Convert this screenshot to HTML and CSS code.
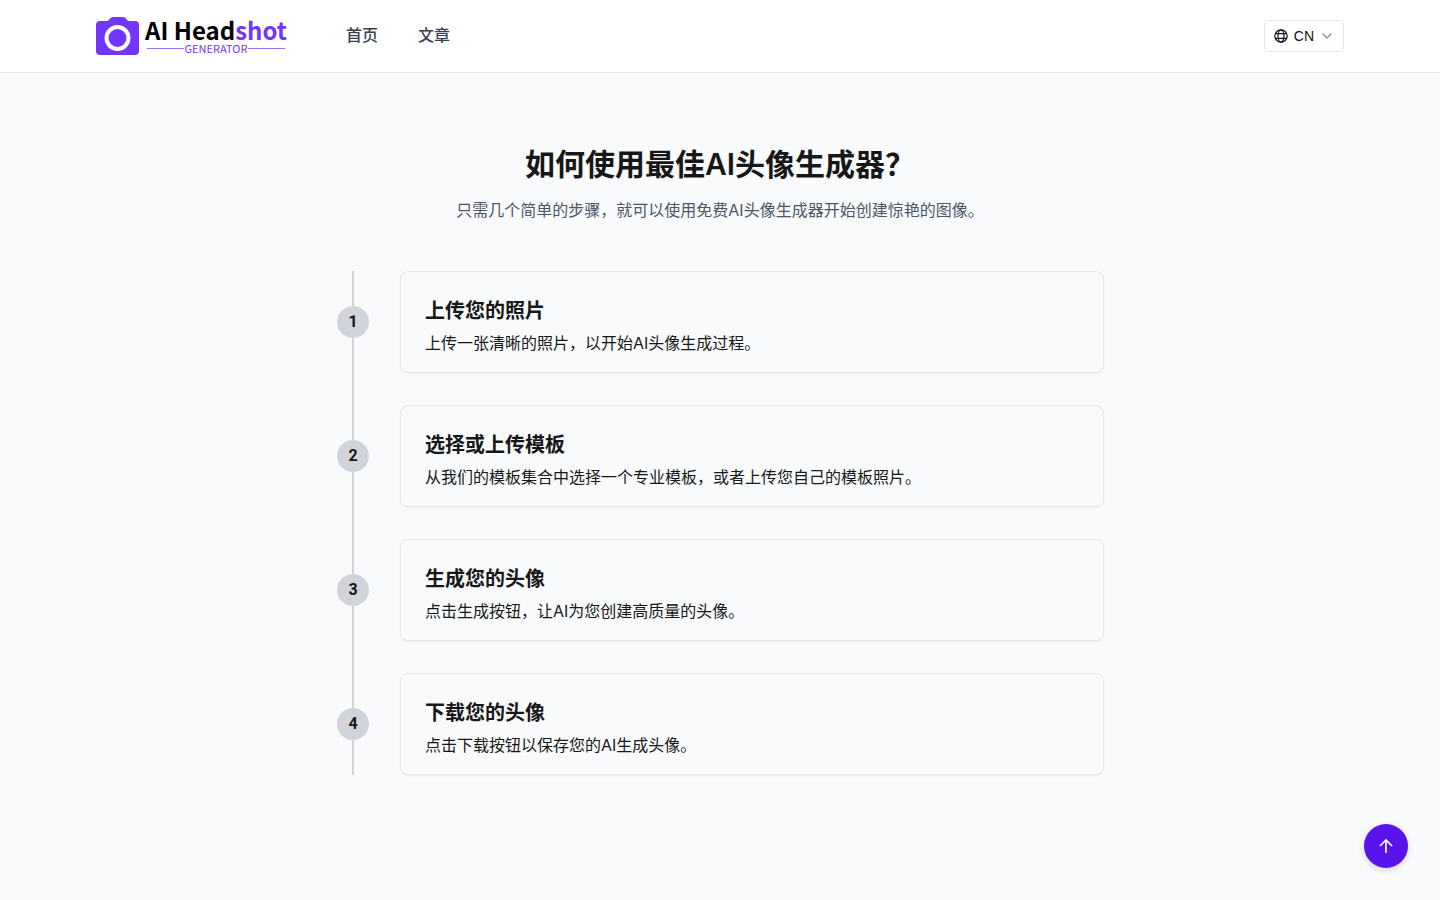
FILE: index.html
```
<!DOCTYPE html>
<html lang="zh-CN">
<head>
    <meta charset="UTF-8">
    <meta name="viewport" content="width=device-width, initial-scale=1.0">
    <title>AI Headshot Generator</title>
    <link rel="stylesheet" href="styles.css">
</head>
<body>

    <header class="header">
        <div class="header-inner">
            <a href="#" class="logo">
                <svg class="logo-icon" viewBox="0 0 43 38" aria-hidden="true">
                    <path fill="#7236ff" d="M4 4h7c2 0 3-4 6-4h10c3 0 4 4 6 4h6a4 4 0 0 1 4 4v26a4 4 0 0 1-4 4H4a4 4 0 0 1-4-4V8a4 4 0 0 1 4-4z"/>
                    <circle cx="21.500" cy="21" r="11" fill="none" stroke="#fff" stroke-width="4"/>
                </svg>
                <span class="logo-text">
                    <span class="logo-name">AI Head<span class="logo-accent">shot</span></span>
                    <span class="logo-sub">GENERATOR</span>
                </span>
            </a>
            <nav class="nav">
                <a href="#">首页</a>
                <a href="#">文章</a>
            </nav>
            <button class="lang" type="button">
                <svg width="16" height="16" viewBox="0 0 16 16" fill="none" stroke="#111" stroke-width="1.200" aria-hidden="true">
                    <circle cx="8" cy="8" r="6.200"/>
                    <ellipse cx="8" cy="8" rx="3" ry="6.200"/>
                    <path d="M2.500 5.600h11M2.500 10.400h11"/>
                </svg>
                <span>CN</span>
                <svg width="16" height="16" viewBox="0 0 16 16" fill="none" stroke="#888" stroke-width="1.200" stroke-linecap="round" stroke-linejoin="round" aria-hidden="true">
                    <path d="M4 6l4 4 4-4"/>
                </svg>
            </button>
        </div>
    </header>

    <main class="guide">
        <h1>如何使用最佳AI头像生成器？</h1>
        <p class="intro">只需几个简单的步骤，就可以使用免费AI头像生成器开始创建惊艳的图像。</p>

        <ol class="steps">
            <li class="step">
                <span class="step-number">1</span>
                <div class="card">
                    <h2>上传您的照片</h2>
                    <p>上传一张清晰的照片，以开始AI头像生成过程。</p>
                </div>
            </li>
            <li class="step">
                <span class="step-number">2</span>
                <div class="card">
                    <h2>选择或上传模板</h2>
                    <p>从我们的模板集合中选择一个专业模板，或者上传您自己的模板照片。</p>
                </div>
            </li>
            <li class="step">
                <span class="step-number">3</span>
                <div class="card">
                    <h2>生成您的头像</h2>
                    <p>点击生成按钮，让AI为您创建高质量的头像。</p>
                </div>
            </li>
            <li class="step">
                <span class="step-number">4</span>
                <div class="card">
                    <h2>下载您的头像</h2>
                    <p>点击下载按钮以保存您的AI生成头像。</p>
                </div>
            </li>
        </ol>
    </main>

    <button class="to-top" type="button" aria-label="返回顶部">
        <svg width="20" height="20" viewBox="0 0 20 20" fill="none" stroke="#fff" stroke-width="1.600" aria-hidden="true">
            <path d="M10 17V4M4 10l6-6 6 6"/>
        </svg>
    </button>

</body>
</html>
```
FILE: styles.css
```
* {
    box-sizing: border-box;
    margin: 0;
    padding: 0;
}

body {
    font-family: Inter, "Noto Sans CJK SC", sans-serif;
    font-size: 16px;
    line-height: 24px;
    background-color: #f9fafc;
    color: #171717;
}

a {
    color: inherit;
    text-decoration: none;
}

/* Header */
.header {
    background-color: #fff;
    border-bottom: 1px solid #e5e7eb;
}

.header-inner {
    display: flex;
    align-items: center;
    max-width: 1280px;
    height: 72px;
    margin: 0 auto;
    padding: 0 16px;
}

.logo {
    display: flex;
    align-items: center;
    gap: 6px;
}

.logo-icon {
    width: 43px;
    height: 38px;
}

.logo-text {
    display: flex;
    flex-direction: column;
    padding-bottom: 2px;
    font-family: "Noto Sans CJK SC", sans-serif;
}

.logo-name {
    font-size: 24px;
    font-weight: 700;
    line-height: 26px;
    color: #000;
}

.logo-accent {
    color: #7236ff;
}

.logo-sub {
    display: flex;
    align-items: center;
    gap: 1px;
    padding: 0 2px;
    font-size: 11px;
    line-height: 10px;
    color: #7236ff;
}

.logo-sub::before,
.logo-sub::after {
    content: "";
    flex: 1;
    height: 1px;
    background-color: #9a70ff;
}

.nav {
    display: flex;
    gap: 40px;
    margin-left: 59px;
    padding-bottom: 2px;
    font-weight: 500;
    color: #374151;
}

.lang {
    display: flex;
    align-items: center;
    gap: 5px;
    height: 32px;
    margin-left: auto;
    padding: 0 8px;
    border: 1px solid #e5e7eb;
    border-radius: 4px;
    background-color: #fff;
    color: #111;
    font-family: "Liberation Sans", sans-serif;
    font-size: 14px;
    cursor: pointer;
}

/* Steps */
.guide {
    max-width: 800px;
    margin: 0 auto;
    padding: 71px 16px 125px;
}

h1 {
    font-size: 30px;
    font-weight: 600;
    line-height: 40px;
    text-align: center;
}

.intro {
    margin-top: 14px;
    color: #4b5563;
    text-align: center;
}

.steps {
    position: relative;
    display: flex;
    flex-direction: column;
    gap: 32px;
    margin-top: 49px;
    list-style: none;
}

.steps::before {
    content: "";
    position: absolute;
    top: 0;
    bottom: 0;
    left: 16px;
    width: 2px;
    background-color: #d1d5db;
}

.step {
    position: relative;
    display: flex;
    align-items: center;
    gap: 31px;
    padding-left: 1px;
}

.step-number {
    display: flex;
    align-items: center;
    justify-content: center;
    width: 32px;
    height: 32px;
    border-radius: 50%;
    background-color: #d1d5db;
    font-family: Roboto, sans-serif;
    font-weight: 700;
}

.card {
    flex: 1;
    padding: 25px 24px 17px;
    border: 1px solid #e5e7eb;
    border-radius: 8px;
    box-shadow: 0 1px 2px rgba(0, 0, 0, 0.05);
}

.card h2 {
    margin-bottom: 6px;
    font-size: 20px;
    font-weight: 600;
    line-height: 28px;
}

/* Back to top */
.to-top {
    position: fixed;
    right: 32px;
    bottom: 32px;
    display: flex;
    align-items: center;
    justify-content: center;
    width: 44px;
    height: 44px;
    border: none;
    border-radius: 50%;
    background-color: #5b13ec;
    box-shadow: 0 2px 6px rgba(0, 0, 0, 0.15);
    cursor: pointer;
}
```
